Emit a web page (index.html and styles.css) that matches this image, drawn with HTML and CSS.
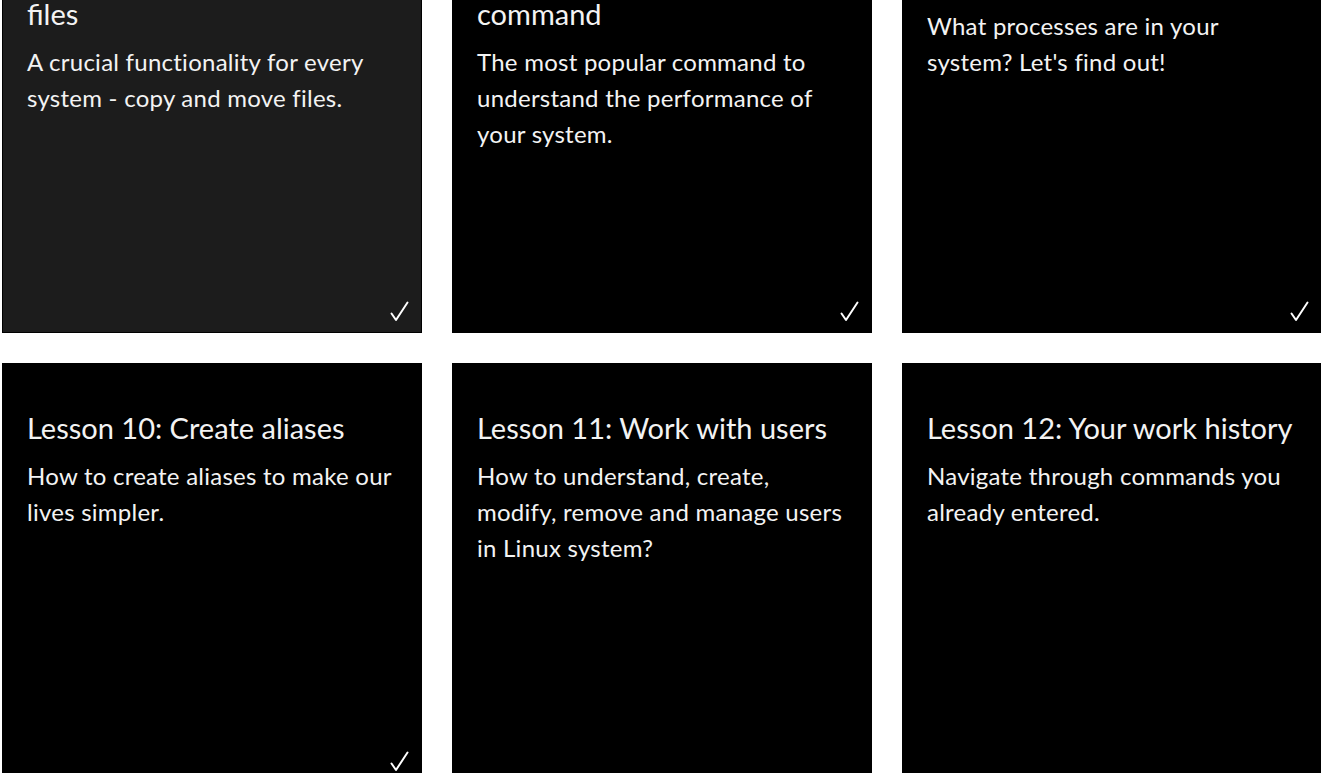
FILE: index.html
```html
<!DOCTYPE html>
<html lang="en">
<head>
<meta charset="utf-8">
<title>Lessons</title>
<link rel="stylesheet" href="styles.css">
</head>
<body>
<main class="lessons">
  <article class="card card--hover">
    <h3 class="card__title">Lesson 7: Copy and move files</h3>
    <p class="card__text">A crucial functionality for every system - copy and move files.</p>
    <svg class="card__done" viewBox="0 0 19 21" width="19" height="21" aria-label="done"><path d="M1.5 12.5 L6 19 L17.5 1.5" fill="none" stroke="#fff" stroke-width="2" stroke-linecap="round" stroke-linejoin="round"/></svg>
  </article>
  <article class="card">
    <h3 class="card__title">Lesson 8: The famous top command</h3>
    <p class="card__text">The most popular command to understand the performance of your system.</p>
    <svg class="card__done" viewBox="0 0 19 21" width="19" height="21" aria-label="done"><path d="M1.5 12.5 L6 19 L17.5 1.5" fill="none" stroke="#fff" stroke-width="2" stroke-linecap="round" stroke-linejoin="round"/></svg>
  </article>
  <article class="card">
    <h3 class="card__title">Lesson 9: Processes</h3>
    <p class="card__text">What processes are in your system? Let's find out!</p>
    <svg class="card__done" viewBox="0 0 19 21" width="19" height="21" aria-label="done"><path d="M1.5 12.5 L6 19 L17.5 1.5" fill="none" stroke="#fff" stroke-width="2" stroke-linecap="round" stroke-linejoin="round"/></svg>
  </article>
  <article class="card">
    <h3 class="card__title">Lesson 10: Create aliases</h3>
    <p class="card__text">How to create aliases to make our lives simpler.</p>
    <svg class="card__done" viewBox="0 0 19 21" width="19" height="21" aria-label="done"><path d="M1.5 12.5 L6 19 L17.5 1.5" fill="none" stroke="#fff" stroke-width="2" stroke-linecap="round" stroke-linejoin="round"/></svg>
  </article>
  <article class="card">
    <h3 class="card__title">Lesson 11: Work with users</h3>
    <p class="card__text">How to understand, create, modify, remove and manage users in Linux system?</p>
  </article>
  <article class="card">
    <h3 class="card__title">Lesson 12: Your work history</h3>
    <p class="card__text">Navigate through commands you already entered.</p>
  </article>
</main>
</body>
</html>
```

FILE: styles.css
```css
html, body {
  margin: 0;
  padding: 0;
  background: #ffffff;
  overflow-x: hidden;
}

body {
  font-family: "Lato", "Liberation Sans", sans-serif;
  color: #f3f3f3;
}

.lessons {
  display: grid;
  grid-template-columns: repeat(3, 420px);
  gap: 30px;
  margin: -87px 0 0 2px;
  width: 1320px;
}

.card {
  position: relative;
  box-sizing: border-box;
  height: 420px;
  background: #000000;
  border: 1px solid #000000;
  padding: 46px 24px 25px;
}

.card--hover {
  background: #1c1c1c;
}

.card__title {
  margin: 0;
  font-size: 29px;
  font-weight: 400;
  line-height: 36px;
}

.card__text {
  margin: 12px 0 0;
  font-size: 24px;
  font-weight: 400;
  line-height: 36px;
  letter-spacing: 0.25px;
}

.card__done {
  position: absolute;
  right: 12px;
  bottom: 10px;
  display: block;
}
```
